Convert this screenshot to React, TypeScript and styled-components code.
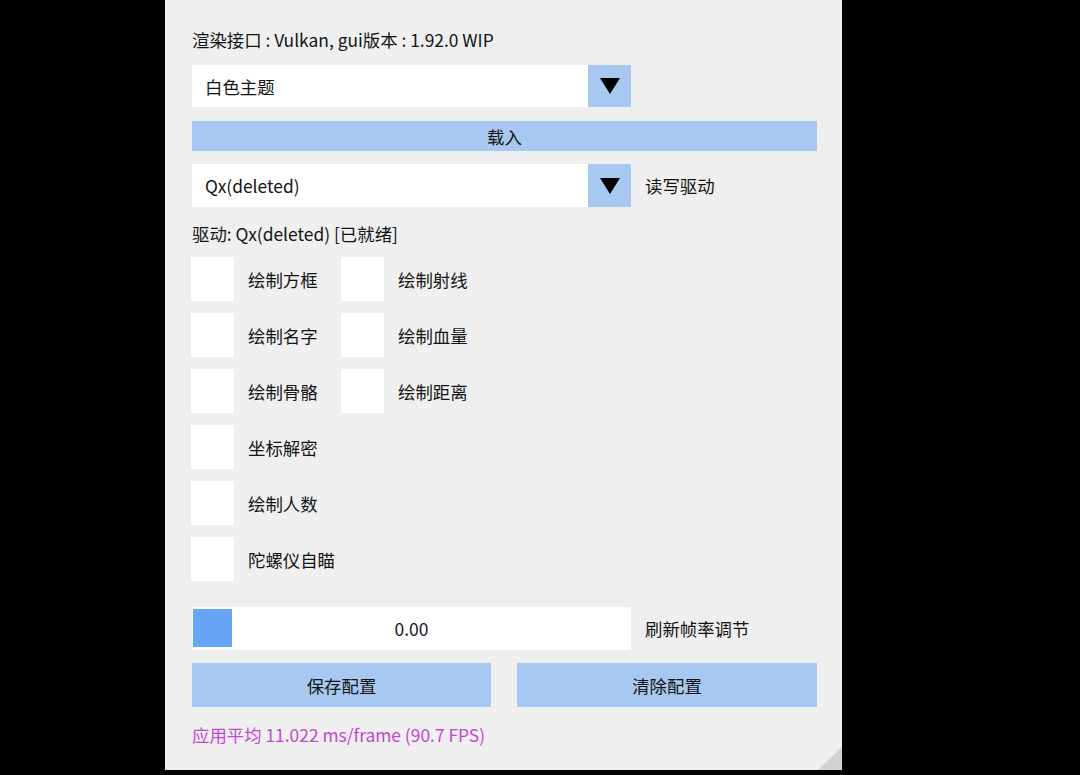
import React from 'react'
import styled, { createGlobalStyle } from 'styled-components'

const GlobalStyle = createGlobalStyle`
  html, body {
    margin: 0;
    padding: 0;
    background: #000;
  }
  body {
    font-family: "Noto Sans CJK SC", "Noto Sans", sans-serif;
    color: #141414;
  }
`

const Screen = styled.div`
  width: 1080px;
  height: 775px;
  background: #000;
  overflow: hidden;
`

const Window = styled.div`
  position: relative;
  box-sizing: border-box;
  margin-left: 165px;
  width: 677px;
  height: 770px;
  background: #efefef;
  padding: 28px 25px 0 27px;
  display: flex;
  flex-direction: column;
`

const Line = styled.div<{ $mt?: number; $color?: string }>`
  margin-top: ${p => p.$mt ?? 0}px;
  height: 24px;
  line-height: 24px;
  font-size: 17.4px;
  color: ${p => p.$color ?? '#141414'};
  white-space: nowrap;
`

const Row = styled.div<{ $mt?: number }>`
  margin-top: ${p => p.$mt ?? 0}px;
  display: flex;
  align-items: center;
  gap: 14px;
`

const ComboBox = styled.div<{ $h: number }>`
  display: flex;
  width: 439px;
  height: ${p => p.$h}px;
`

const ComboValue = styled.div`
  flex: 1;
  background: #fff;
  padding-left: 13px;
  display: flex;
  align-items: center;
  font-size: 17.4px;
`

const ComboArrow = styled.div`
  width: 43px;
  background: #a7c8f1;
  display: flex;
  align-items: center;
  justify-content: center;
`

const Label = styled.span`
  font-size: 17.4px;
  white-space: nowrap;
`

const Button = styled.div<{ $h: number; $w?: number }>`
  width: ${p => (p.$w ? `${p.$w}px` : '100%')};
  height: ${p => p.$h}px;
  background: #a7c8f1;
  display: flex;
  align-items: center;
  justify-content: center;
  font-size: 17.4px;
`

const CheckGrid = styled.div`
  margin-top: 11px;
  display: grid;
  grid-template-columns: 150px 150px;
  row-gap: 12px;
  margin-left: -1px;
`

const CheckItem = styled.div`
  display: flex;
  align-items: center;
  gap: 14px;
`

const CheckBox = styled.div`
  width: 43px;
  height: 44px;
  background: #fff;
`

const Slider = styled.div`
  position: relative;
  box-sizing: border-box;
  width: 439px;
  height: 43px;
  background: #fff;
  display: flex;
  align-items: center;
  justify-content: center;
  font-size: 17.4px;
`

const Grab = styled.div`
  position: absolute;
  left: 1px;
  top: 2px;
  width: 39px;
  height: 38px;
  background: #67a5f5;
`

const ButtonRow = styled.div`
  margin-top: 13px;
  display: flex;
  justify-content: space-between;
`

const Grip = styled.svg`
  position: absolute;
  right: 0;
  bottom: 0;
`

const Arrow = () => (
  <svg width="20" height="16" viewBox="0 0 20 16">
    <polygon points="0,0 20,0 10,16" fill="#000" />
  </svg>
)

const Combo: React.FC<{ value: string; h: number }> = ({ value, h }) => (
  <ComboBox $h={h}>
    <ComboValue>{value}</ComboValue>
    <ComboArrow>
      <Arrow />
    </ComboArrow>
  </ComboBox>
)

const checks = [
  '绘制方框', '绘制射线',
  '绘制名字', '绘制血量',
  '绘制骨骼', '绘制距离',
  '坐标解密', '',
  '绘制人数', '',
  '陀螺仪自瞄', '',
]

const App: React.FC = () => {
  return (
    <Screen>
      <GlobalStyle />
      <Window>
        <Line>渲染接口 : Vulkan, gui版本 : 1.92.0 WIP</Line>
        <Row $mt={13}>
          <Combo value="白色主题" h={42} />
        </Row>
        <Row $mt={14}>
          <Button $h={30}>载入</Button>
        </Row>
        <Row $mt={13}>
          <Combo value="Qx(deleted)" h={43} />
          <Label>读写驱动</Label>
        </Row>
        <Line $mt={15}>驱动: Qx(deleted) [已就绪]</Line>
        <CheckGrid>
          {checks.map((c, i) =>
            c ? (
              <CheckItem key={i}>
                <CheckBox />
                <Label>{c}</Label>
              </CheckItem>
            ) : (
              <div key={i} />
            )
          )}
        </CheckGrid>
        <Row $mt={26}>
          <Slider>
            <Grab />
            0.00
          </Slider>
          <Label>刷新帧率调节</Label>
        </Row>
        <ButtonRow>
          <Button $h={44} $w={299}>保存配置</Button>
          <Button $h={44} $w={300}>清除配置</Button>
        </ButtonRow>
        <Line $mt={16} $color="#c347d0">应用平均 11.022 ms/frame (90.7 FPS)</Line>
        <Grip width="24" height="23" viewBox="0 0 24 23">
          <polygon points="24,0 24,23 0,23" fill="#d2d2d2" />
        </Grip>
      </Window>
    </Screen>
  )
}

export default App
